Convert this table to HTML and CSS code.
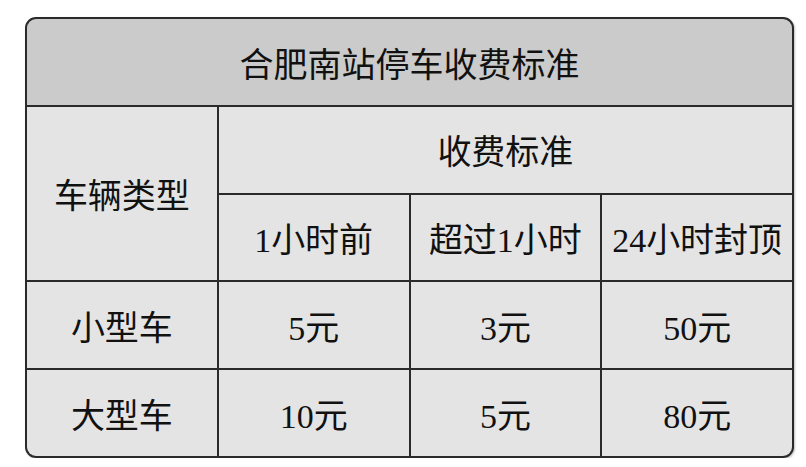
FILE: index.html
```html
<!DOCTYPE html>
<html lang="zh-CN">
<head>
<meta charset="utf-8">
<title>合肥南站停车收费标准</title>
<link rel="stylesheet" href="styles.css">
</head>
<body>
<div class="fee-table">
  <div class="cell title">合肥南站停车收费标准</div>
  <div class="cell type">车辆类型</div>
  <div class="cell std">收费标准</div>
  <div class="cell">1小时前</div>
  <div class="cell">超过1小时</div>
  <div class="cell">24小时封顶</div>
  <div class="cell">小型车</div>
  <div class="cell">5元</div>
  <div class="cell">3元</div>
  <div class="cell">50元</div>
  <div class="cell">大型车</div>
  <div class="cell">10元</div>
  <div class="cell">5元</div>
  <div class="cell">80元</div>
</div>
</body>
</html>
```
FILE: styles.css
```css
html, body {
  margin: 0;
  padding: 0;
  background: #ffffff;
}
body {
  padding: 17px 0 0 25px;
}
.fee-table {
  width: 769px;
  height: 441px;
  box-sizing: border-box;
  border: 2px solid #2a2a2a;
  border-radius: 11px;
  overflow: hidden;
  background: #2a2a2a;
  display: grid;
  grid-template-columns: repeat(4, 1fr);
  grid-template-rows: repeat(5, 1fr);
  gap: 2px;
  box-shadow: 1px 1px 2px rgba(0, 0, 0, 0.25);
}
.cell {
  background: #e4e4e4;
  display: flex;
  align-items: center;
  justify-content: center;
  font-family: "Liberation Serif", "Noto Sans CJK SC", serif;
  font-size: 34px;
  font-weight: 400;
  color: #111111;
  white-space: nowrap;
}
.title {
  grid-column: 1 / -1;
  background: #cbcbcb;
  font-family: "Noto Sans CJK SC", sans-serif;
  font-size: 34px;
  padding-top: 2px;
}
.type {
  grid-row: span 2;
}
.std {
  grid-column: span 3;
}
```
